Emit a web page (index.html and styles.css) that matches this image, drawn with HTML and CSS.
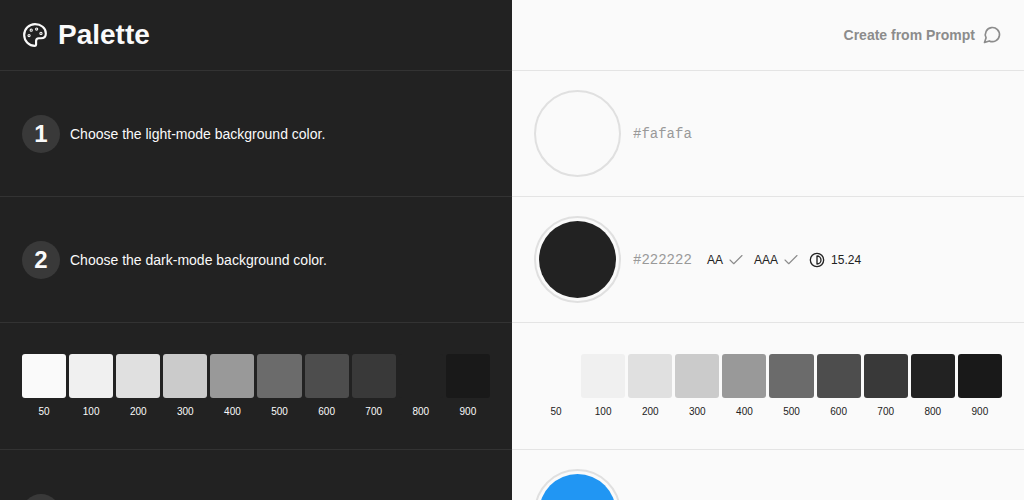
FILE: index.html
```
<!DOCTYPE html>
<html lang="en">
<head>
  <meta charset="utf-8">
  <meta name="viewport" content="width=device-width, initial-scale=1">
  <title>Palette</title>
  <link rel="stylesheet" href="styles.css">
</head>
<body>
  <header class="row">
    <div class="dark brand">
      <svg class="icon" width="26" height="26" viewBox="0 0 24 24" aria-hidden="true">
        <circle class="dot" cx="13.5" cy="6.5" r="1"/>
        <circle class="dot" cx="17.5" cy="10.5" r="1"/>
        <circle class="dot" cx="8.5" cy="7.5" r="1"/>
        <circle class="dot" cx="6.5" cy="12.5" r="1"/>
        <path d="M12 2C6.5 2 2 6.5 2 12s4.500 10 10 10c.6 0 1-.4 1-1v-3.500c0-1.400 1.100-2.500 2.500-2.500h2c2.500 0 4.500-1.600 4.500-4.500C22 5.500 17.500 2 12 2z"/>
      </svg>
      <h1>Palette</h1>
    </div>
    <div class="light actions">
      <button class="prompt-button" type="button">
        Create from Prompt
        <svg class="icon" width="20" height="20" viewBox="0 0 24 24" aria-hidden="true">
          <path d="m3 21 1.900-5.700a8.500 8.500 0 1 1 3.800 3.800z"/>
        </svg>
      </button>
    </div>
  </header>

  <main>
    <section class="row">
      <div class="dark step">
        <span class="number">1</span>
        <label for="light-color">Choose the light-mode background color.</label>
      </div>
      <div class="light picker">
        <input class="color" type="color" id="light-color" value="#fafafa">
        <input class="hex" type="text" value="#fafafa" aria-label="Light-mode hex value">
      </div>
    </section>

    <section class="row">
      <div class="dark step">
        <span class="number">2</span>
        <label for="dark-color">Choose the dark-mode background color.</label>
      </div>
      <div class="light picker">
        <input class="color" type="color" id="dark-color" value="#222222">
        <input class="hex" type="text" value="#222222" aria-label="Dark-mode hex value">
        <div class="contrast">
          <span class="grade">AA
            <svg class="icon check" width="18" height="18" viewBox="0 0 24 24" aria-hidden="true"><path d="M20 6 9 17l-5-5"/></svg>
          </span>
          <span class="grade">AAA
            <svg class="icon check" width="18" height="18" viewBox="0 0 24 24" aria-hidden="true"><path d="M20 6 9 17l-5-5"/></svg>
          </span>
          <span class="ratio">
            <svg class="icon" width="16" height="16" viewBox="0 0 24 24" aria-hidden="true"><circle cx="12" cy="12" r="10"/><path d="M12 18a6 6 0 0 0 0-12v12z"/></svg>
            15.24
          </span>
        </div>
      </div>
    </section>

    <section class="row">
      <ul class="dark scale">
        <li><span class="swatch c50"></span>50</li>
        <li><span class="swatch c100"></span>100</li>
        <li><span class="swatch c200"></span>200</li>
        <li><span class="swatch c300"></span>300</li>
        <li><span class="swatch c400"></span>400</li>
        <li><span class="swatch c500"></span>500</li>
        <li><span class="swatch c600"></span>600</li>
        <li><span class="swatch c700"></span>700</li>
        <li><span class="swatch c800"></span>800</li>
        <li><span class="swatch c900"></span>900</li>
      </ul>
      <ul class="light scale">
        <li><span class="swatch c50"></span>50</li>
        <li><span class="swatch c100"></span>100</li>
        <li><span class="swatch c200"></span>200</li>
        <li><span class="swatch c300"></span>300</li>
        <li><span class="swatch c400"></span>400</li>
        <li><span class="swatch c500"></span>500</li>
        <li><span class="swatch c600"></span>600</li>
        <li><span class="swatch c700"></span>700</li>
        <li><span class="swatch c800"></span>800</li>
        <li><span class="swatch c900"></span>900</li>
      </ul>
    </section>

    <section class="row">
      <div class="dark step">
        <span class="number"></span>
      </div>
      <div class="light picker">
        <input class="color" type="color" value="#2196f3" aria-label="Primary color">
      </div>
    </section>
  </main>
</body>
</html>
```
FILE: styles.css
```
* {
  box-sizing: border-box;
}

body {
  margin: 0;
  font-family: "Liberation Sans", Arial, sans-serif;
  font-size: 14px;
  background: linear-gradient(to right, #222 50%, #fafafa 50%);
}

/* Every row has a dark half and a light half */
.row {
  display: grid;
  grid-template-columns: 1fr 1fr;
}

.dark,
.light {
  display: flex;
  align-items: center;
  padding: 19px 22px;
  border-bottom: 1px solid;
}

.dark {
  background-color: #222;
  border-color: #333;
  color: #fafafa;
}

.light {
  background-color: #fafafa;
  border-color: #e4e4e4;
  color: #222;
}

.icon {
  flex: none;
  fill: none;
  stroke: currentColor;
  stroke-width: 2;
  stroke-linecap: round;
  stroke-linejoin: round;
}

/* Header */
.brand {
  gap: 10px;
}

.brand h1 {
  margin: 0;
  font-size: 28px;
  line-height: 32px;
}

.dot {
  stroke-width: 1;
}

.actions {
  justify-content: flex-end;
}

.prompt-button {
  display: flex;
  align-items: center;
  gap: 7px;
  padding: 0;
  border: none;
  background: none;
  color: #8c8c8c;
  font: inherit;
  font-weight: bold;
  cursor: pointer;
}

/* Steps */
.step {
  gap: 10px;
}

.number {
  display: flex;
  align-items: center;
  justify-content: center;
  width: 38px;
  height: 38px;
  border-radius: 50%;
  background-color: #393939;
  font-size: 24px;
  font-weight: bold;
}

.picker {
  gap: 12px;
}

.color {
  appearance: none;
  flex: none;
  width: 87px;
  height: 87px;
  padding: 3px;
  border: 2px solid #e0e0e0;
  border-radius: 50%;
  background: none;
  cursor: pointer;
}

.color::-webkit-color-swatch-wrapper {
  padding: 0;
}

.color::-webkit-color-swatch {
  border: none;
  border-radius: 50%;
}

.hex {
  width: 62px;
  padding: 0;
  border: none;
  background: none;
  color: #999;
  font-family: "Liberation Mono", "Courier New", monospace;
  font-size: 14px;
}

/* Contrast result */
.contrast,
.grade,
.ratio {
  display: flex;
  align-items: center;
}

.contrast {
  gap: 9px;
  font-size: 12px;
}

.grade {
  gap: 4px;
}

.ratio {
  gap: 6px;
}

.check {
  color: #8c8c8c;
  stroke-width: 1.5;
}

/* Color scale */
.scale {
  gap: 3px;
  margin: 0;
  padding: 31px 22px 30px;
  list-style: none;
}

.scale li {
  flex: 1;
  font-size: 10px;
  line-height: 14px;
  text-align: center;
}

.swatch {
  display: block;
  aspect-ratio: 1;
  margin-bottom: 7px;
  border-radius: 3px;
}

.c50 { background-color: #fafafa; }
.c100 { background-color: #f0f0f0; }
.c200 { background-color: #e0e0e0; }
.c300 { background-color: #cbcbcb; }
.c400 { background-color: #999; }
.c500 { background-color: #6b6b6b; }
.c600 { background-color: #4d4d4d; }
.c700 { background-color: #393939; }
.c800 { background-color: #222; }
.c900 { background-color: #191919; }
```
